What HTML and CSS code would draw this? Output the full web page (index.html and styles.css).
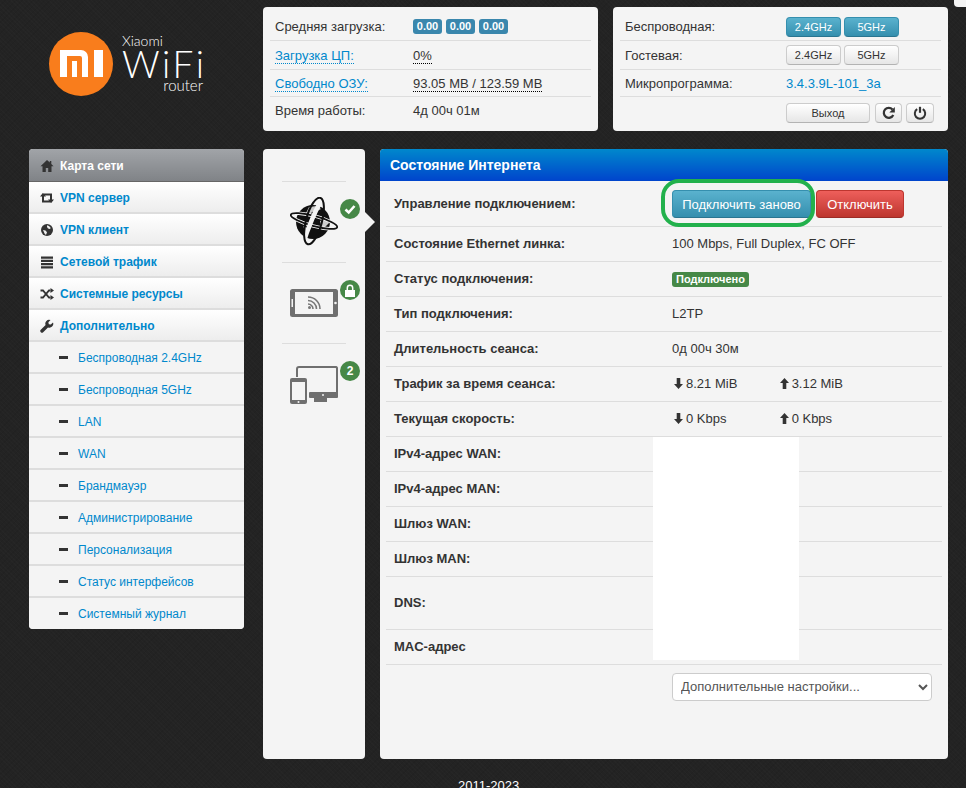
FILE: index.html
```html
<!DOCTYPE html>
<html lang="en">
<head>
    <meta charset="UTF-8">
    <meta name="viewport" content="width=device-width, initial-scale=1.0">
    <title>Xiaomi WiFi router</title>
    <link rel="stylesheet" href="styles.css">
</head>
<body>
    <div class="corner-tab"></div>
    <div class="container">
        <div class="top-row">
            <div class="logo">
                <svg class="logo-mark" width="64" height="64" viewBox="0 0 64 64">
                    <circle cx="32" cy="32" r="32" fill="#f97d1c"/>
                    <path d="M11 18h21a7 7 0 0 1 7 7v20h-6V26a2 2 0 0 0-2-2H18v21h-7z" fill="#fff"/>
                    <path d="M23 29h5v16h-5zM45 18h9v27h-9z" fill="#fff"/>
                </svg>
                <div class="logo-text">
                    <span class="logo-small">Xiaomi</span>
                    <span class="logo-big">WiFi</span>
                    <span class="logo-router">router</span>
                </div>
            </div>

            <div class="card">
                <div class="info-row">
                    <div class="info-label">Средняя загрузка:</div>
                    <div class="info-value badges"><span class="load">0.00</span><span class="load">0.00</span><span class="load">0.00</span></div>
                </div>
                <div class="info-row">
                    <div class="info-label"><a class="dotted" href="#">Загрузка ЦП:</a></div>
                    <div class="info-value"><span class="dotted-dark">0%</span></div>
                </div>
                <div class="info-row">
                    <div class="info-label"><a class="dotted" href="#">Свободно ОЗУ:</a></div>
                    <div class="info-value"><span class="dotted-dark">93.05 MB / 123.59 MB</span></div>
                </div>
                <div class="info-row">
                    <div class="info-label">Время работы:</div>
                    <div class="info-value">4д 00ч 01м</div>
                </div>
            </div>

            <div class="card card-last">
                <div class="info-row">
                    <div class="info-label">Беспроводная:</div>
                    <div class="info-value narrow btn-pair">
                        <button class="btn btn-info btn-band">2.4GHz</button>
                        <button class="btn btn-info btn-band">5GHz</button>
                    </div>
                </div>
                <div class="info-row">
                    <div class="info-label">Гостевая:</div>
                    <div class="info-value narrow btn-pair">
                        <button class="btn btn-band">2.4GHz</button>
                        <button class="btn btn-band">5GHz</button>
                    </div>
                </div>
                <div class="info-row">
                    <div class="info-label">Микропрограмма:</div>
                    <div class="info-value narrow"><a href="#">3.4.3.9L-101_3a</a></div>
                </div>
                <div class="info-row">
                    <div class="info-label"></div>
                    <div class="info-value narrow btn-tools">
                        <button class="btn btn-exit">Выход</button>
                        <button class="btn btn-icon">
                            <svg width="14" height="14" viewBox="0 0 14 14"><path d="M11.300 9A5 5 0 1 1 10.500 3.400" fill="none" stroke="#333" stroke-width="2.200"/><path d="M12.800 1v5.500H7.300z" fill="#333"/></svg>
                        </button>
                        <button class="btn btn-icon btn-power">
                            <svg width="14" height="14" viewBox="0 0 14 14"><path d="M4.200 3.200a5.200 5.200 0 1 0 5.600 0" fill="none" stroke="#333" stroke-width="2"/><path d="M7 .8v6" stroke="#333" stroke-width="2.200"/></svg>
                        </button>
                    </div>
                </div>
            </div>
        </div>

        <div class="main-row">
            <div class="sidebar">
                <a class="nav-item active" href="#">
                    <svg class="nav-icon" width="14" height="14" viewBox="0 0 14 14"><path d="M7 1 .5 7.300h2V13h3.300V9h2.400v4h3.300V7.300h2L11.300 5V2H9.800v1.600z" fill="#333"/></svg>
                    Карта сети
                </a>
                <a class="nav-item" href="#">
                    <svg class="nav-icon" width="14" height="14" viewBox="0 0 14 14"><path d="M3 4.500V10.500h7M11 9.500V3.500H4" fill="none" stroke="#333" stroke-width="2"/><path d="M0 5.500 3 1.800 6 5.500zM8 8.500h6L11 12.200z" fill="#333"/></svg>
                    VPN сервер
                </a>
                <a class="nav-item" href="#">
                    <svg class="nav-icon" width="14" height="14" viewBox="0 0 14 14"><circle cx="7" cy="7" r="6" fill="#333"/><path d="M7 2.300 9 3l1.800 2-1 1-1.800-.6L7 4zM3 7l2.500.5L7 9.300 6 12 4.500 10.500z" fill="#eee"/></svg>
                    VPN клиент
                </a>
                <a class="nav-item" href="#">
                    <svg class="nav-icon" width="14" height="14" viewBox="0 0 14 14"><path d="M1 1.500h12v2.200H1zM1 4.800h12V7H1zM1 8h12v2.200H1zM1 11.300h12v2.200H1z" fill="#333"/></svg>
                    Сетевой трафик
                </a>
                <a class="nav-item" href="#">
                    <svg class="nav-icon" width="14" height="14" viewBox="0 0 14 14"><path d="M.5 3.500h2.500l6 7h1.500" fill="none" stroke="#333" stroke-width="1.800"/><path d="M.5 10.500h2.500l6-7h1.500" fill="none" stroke="#333" stroke-width="1.800"/><path d="M10.500 1 14 3.500 10.500 6zM10.500 8 14 10.500 10.500 13z" fill="#333"/></svg>
                    Системные ресурсы
                </a>
                <a class="nav-item" href="#">
                    <svg class="nav-icon" width="14" height="14" viewBox="0 0 14 14"><path d="M13 3.500 10.800 5.600 8.800 5.200 8.400 3.200 10.500 1A3.800 3.800 0 0 0 5.600 6L.8 10.800a1.600 1.600 0 0 0 2.400 2.400L8 8.400A3.800 3.800 0 0 0 13 3.500z" fill="#333"/></svg>
                    Дополнительно
                </a>
                <a class="nav-sub" href="#"><span class="dash"></span>Беспроводная 2.4GHz</a>
                <a class="nav-sub" href="#"><span class="dash"></span>Беспроводная 5GHz</a>
                <a class="nav-sub" href="#"><span class="dash"></span>LAN</a>
                <a class="nav-sub" href="#"><span class="dash"></span>WAN</a>
                <a class="nav-sub" href="#"><span class="dash"></span>Брандмауэр</a>
                <a class="nav-sub" href="#"><span class="dash"></span>Администрирование</a>
                <a class="nav-sub" href="#"><span class="dash"></span>Персонализация</a>
                <a class="nav-sub" href="#"><span class="dash"></span>Статус интерфейсов</a>
                <a class="nav-sub" href="#"><span class="dash"></span>Системный журнал</a>
            </div>

            <div class="map-panel">
                <div class="map-arrow"></div>
                <div class="map-item">
                    <svg width="50" height="50" viewBox="0 0 50 50">
                        <circle cx="24" cy="25" r="17" fill="#111"/>
                        <path d="M20 10l8-1 4 3-4 2-5 1-2 3-4-2zM31 24l6-2 3 4-5 5-3-3zM14 29l4 2 1 5-3-2z" fill="#ccc"/>
                        <ellipse cx="25" cy="24" rx="24" ry="5" transform="rotate(15 25 24)" fill="none" stroke="#f4f4f4" stroke-width="3.500"/>
                        <ellipse cx="25" cy="24" rx="24" ry="5" transform="rotate(15 25 24)" fill="none" stroke="#111" stroke-width="1.800"/>
                        <path d="M33.500 2.500C29 8 25 17 20 30 17 37 15 43 16 46" fill="none" stroke="#f4f4f4" stroke-width="4.500"/>
                        <ellipse cx="25" cy="24" rx="24" ry="8" transform="rotate(-75 25 24)" fill="none" stroke="#111" stroke-width="2"/>
                    </svg>
                    <span class="map-badge">
                        <svg width="12" height="12" viewBox="0 0 12 12"><path d="M1.500 6.500 4.700 9.500 10.500 3" fill="none" stroke="#fff" stroke-width="2.600"/></svg>
                    </span>
                </div>
                <div class="map-item">
                    <svg width="50" height="50" viewBox="0 0 50 50">
                        <rect x="1" y="11" width="48" height="28" rx="2.500" fill="#6f6f6f"/>
                        <rect x="6" y="14" width="38" height="22" fill="#f4f4f4"/>
                        <circle cx="46.500" cy="25" r="1.300" fill="#f4f4f4"/>
                        <rect x="2.500" y="21" width="1.500" height="8" fill="#f4f4f4"/>
                        <path d="M19 19a12 12 0 0 1 12 12M19 22.500a8.500 8.500 0 0 1 8.500 8.500M19 26a5 5 0 0 1 5 5" fill="none" stroke="#777" stroke-width="1.600"/>
                        <circle cx="20.500" cy="29.500" r="1.500" fill="#777"/>
                    </svg>
                    <span class="map-badge">
                        <svg width="12" height="13" viewBox="0 0 12 13"><path d="M1 6h10v7H1z" fill="#fff"/><path d="M3.300 6V4a2.700 2.700 0 0 1 5.400 0v2" fill="none" stroke="#fff" stroke-width="1.500"/></svg>
                    </span>
                </div>
                <div class="map-item">
                    <svg width="50" height="50" viewBox="0 0 50 50">
                        <path d="M8 18V10a2 2 0 0 1 2-2h37a2 2 0 0 1 1 1v25" fill="none" stroke="#6f6f6f" stroke-width="2"/>
                        <rect x="20" y="33" width="29" height="6" rx="1" fill="#6f6f6f"/>
                        <circle cx="34" cy="36" r="1" fill="#f4f4f4"/>
                        <path d="M25 39h13v4h-13z" fill="#6f6f6f"/>
                        <rect x="1" y="19" width="17" height="26" rx="2" fill="#6f6f6f"/>
                        <rect x="3" y="23" width="13" height="18" fill="#f4f4f4"/>
                        <circle cx="9.500" cy="43" r="1" fill="#f4f4f4"/>
                    </svg>
                    <span class="map-badge">2</span>
                </div>
            </div>

            <div class="content">
                <div class="content-head">Состояние Интернета</div>
                <table class="status-table">
                    <tr class="row-first">
                        <th>Управление подключением:</th>
                        <td>
                            <div class="action-btns">
                                <button class="btn btn-info btn-action">Подключить заново</button>
                                <button class="btn btn-danger btn-action">Отключить</button>
                            </div>
                        </td>
                    </tr>
                    <tr><th>Состояние Ethernet линка:</th><td>100 Mbps, Full Duplex, FC OFF</td></tr>
                    <tr><th>Статус подключения:</th><td><span class="label-ok">Подключено</span></td></tr>
                    <tr><th>Тип подключения:</th><td>L2TP</td></tr>
                    <tr><th>Длительность сеанса:</th><td>0д 00ч 30м</td></tr>
                    <tr>
                        <th>Трафик за время сеанса:</th>
                        <td class="traffic">
                            <span class="traffic-val"><svg width="9" height="11" viewBox="0 0 10 12"><path d="M3 0h4v6.500h3L5 12 0 6.500h3z" fill="#333"/></svg>8.21 MiB</span>
                            <span class="traffic-val"><svg width="9" height="11" viewBox="0 0 10 12"><path d="M3 12h4V5.500h3L5 0 0 5.500h3z" fill="#333"/></svg>3.12 MiB</span>
                        </td>
                    </tr>
                    <tr>
                        <th>Текущая скорость:</th>
                        <td class="traffic">
                            <span class="traffic-val"><svg width="9" height="11" viewBox="0 0 10 12"><path d="M3 0h4v6.500h3L5 12 0 6.500h3z" fill="#333"/></svg>0 Kbps</span>
                            <span class="traffic-val"><svg width="9" height="11" viewBox="0 0 10 12"><path d="M3 12h4V5.500h3L5 0 0 5.500h3z" fill="#333"/></svg>0 Kbps</span>
                        </td>
                    </tr>
                    <tr><th>IPv4-адрес WAN:</th><td></td></tr>
                    <tr><th>IPv4-адрес MAN:</th><td></td></tr>
                    <tr><th>Шлюз WAN:</th><td></td></tr>
                    <tr><th>Шлюз MAN:</th><td></td></tr>
                    <tr class="row-dns"><th>DNS:</th><td></td></tr>
                    <tr><th>MAC-адрес</th><td></td></tr>
                </table>
                <div class="select-row">
                    <select class="more-select"><option>Дополнительные настройки...</option></select>
                </div>
                <!-- overlays on top of the table -->
                <div class="ring"></div>
                <div class="blank"></div>
            </div>
        </div>

        <div class="footer">2011-2023</div>
    </div>
</body>
</html>
```

FILE: styles.css
```css
html, body {
    height: 788px;
    overflow: hidden;
}
body {
    font-family: "Liberation Sans", Arial, sans-serif;
    font-size: 13px;
    margin: 0;
    padding: 0;
    color: #333;
    background-color: #232323;
    background-image:
        repeating-linear-gradient(45deg, rgba(255, 255, 255, 0.012) 0 1px, transparent 1px 3px),
        repeating-linear-gradient(-45deg, rgba(0, 0, 0, 0.06) 0 1px, transparent 1px 4px);
}
a {
    color: #0088cc;
    text-decoration: none;
}
.container {
    position: relative;
    padding: 7px 18px 0 29px;
}
.corner-tab {
    position: absolute;
    top: -6px;
    right: 0;
    width: 12px;
    height: 13px;
    background: #f4f4f4;
    border-radius: 4px 0 0 4px;
}

/* top row */
.top-row {
    display: flex;
}
.logo {
    flex: none;
    width: 234px;
    height: 124px;
    position: relative;
}
.logo-mark {
    position: absolute;
    left: 20px;
    top: 25px;
}
.logo-text {
    position: absolute;
    left: 93px;
    top: 27px;
    width: 81px;
    color: #fff;
    font-family: Lato, "Liberation Sans", sans-serif;
    font-weight: 300;
}
.logo-small {
    display: block;
    font-size: 14px;
    line-height: 14px;
}
.logo-big {
    display: block;
    font-size: 37px;
    line-height: 31px;
    letter-spacing: 2.500px;
}
.logo-router {
    display: block;
    font-size: 15px;
    line-height: 13px;
    text-align: right;
}
.card {
    flex: none;
    width: 335px;
    height: 124px;
    box-sizing: border-box;
    margin-right: 15px;
    padding: 6px 7px;
    background: #f4f4f4;
    border-radius: 4px;
}
.card-last {
    margin-right: 0;
}
.info-row {
    display: flex;
    align-items: center;
    height: 28px;
    padding-left: 5px;
    border-bottom: 1px solid #ddd;
}
.info-row:first-child {
    height: 27px;
}
.info-row:nth-child(3) {
    height: 26px;
}
.info-row:last-child {
    border-bottom: none;
    height: 27px;
}
.info-label {
    width: 138px;
    color: #333;
}
.info-value.narrow {
    margin-left: 23px;
}
.dotted {
    border-bottom: 1px dotted #0088cc;
}
.dotted-dark {
    border-bottom: 1px dotted #000;
}
.badges {
    display: flex;
    gap: 4px;
}
.load {
    display: block;
    width: 29px;
    height: 15px;
    line-height: 15px;
    text-align: center;
    font-size: 11px;
    font-weight: bold;
    color: #fff;
    background: #3a87ad;
    border-radius: 3px;
}

/* buttons */
.btn {
    font-family: inherit;
    font-size: 11px;
    color: #333;
    padding: 0;
    border: 1px solid #ccc;
    border-bottom-color: #b3b3b3;
    border-radius: 4px;
    background: linear-gradient(#ffffff, #e6e6e6);
    cursor: pointer;
}
.btn-info {
    color: #fff;
    background: linear-gradient(#5ab2ce, #358fae);
    border-color: #358fae;
    border-bottom-color: #2a7590;
}
.btn-danger {
    color: #fff;
    background: linear-gradient(#ee5f5b, #bd362f);
    border-color: #bd362f;
    border-bottom-color: #9c2c27;
}
.btn-pair {
    display: flex;
    gap: 3px;
}
.btn-band {
    width: 55px;
    height: 20px;
}
.btn-tools {
    display: flex;
    margin-top: 4px;
}
.btn-exit {
    width: 84px;
    height: 20px;
}
.btn-icon {
    width: 27px;
    height: 20px;
    margin-left: 5px;
    display: flex;
    align-items: center;
    justify-content: center;
}
.btn-power {
    width: 28px;
    margin-left: 4px;
}
.action-btns {
    display: flex;
    gap: 5px;
    padding-top: 2px;
}
.btn-action {
    height: 28px;
    font-size: 13px;
}

/* sidebar */
.main-row {
    display: flex;
    align-items: flex-start;
    margin-top: 18px;
}
.sidebar {
    width: 215px;
    margin-right: 19px;
    font-size: 12px;
    background: #f4f4f4;
    border-radius: 4px;
    overflow: hidden;
}
.nav-item, .nav-sub {
    display: flex;
    align-items: center;
    box-sizing: border-box;
    height: 32px;
    padding-top: 1px;
    border-bottom: 2px solid #ddd;
}
.nav-item {
    padding-left: 11px;
    font-weight: bold;
    background: linear-gradient(#ffffff, #ededed);
}
.nav-item.active {
    height: 33px;
    color: #fff;
    background: linear-gradient(#a1a4a8, #808387);
    border-bottom: 1px solid #666;
}
.nav-icon {
    margin-right: 6px;
    flex: none;
}
.nav-sub {
    padding-left: 30px;
    background: #f4f4f4;
}
.nav-sub:last-child {
    height: 31px;
    padding-top: 0;
    border-bottom: none;
}
.dash {
    width: 9px;
    height: 3px;
    margin-right: 10px;
    background: #333;
}

/* middle panel */
.map-panel {
    position: relative;
    flex: none;
    width: 102px;
    height: 610px;
    margin-right: 15px;
    padding-top: 32px;
    box-sizing: border-box;
    background: #f4f4f4;
    border-radius: 4px;
}
.map-arrow {
    position: absolute;
    right: -10px;
    top: 63px;
    border-left: 10px solid #f4f4f4;
    border-top: 10px solid transparent;
    border-bottom: 10px solid transparent;
}
.map-item {
    position: relative;
    height: 80px;
    margin: 0 19px 0;
    border-top: 1px solid #ddd;
    box-sizing: content-box;
}
.map-item svg {
    position: absolute;
    left: 7px;
    top: 15px;
}
.map-badge {
    position: absolute;
    left: 58px;
    top: 17px;
    width: 20px;
    height: 20px;
    display: flex;
    align-items: center;
    justify-content: center;
    color: #fff;
    font-weight: bold;
    font-size: 12px;
    background: #468847;
    border-radius: 50%;
}
.map-badge svg {
    position: static;
}

/* content */
.content {
    position: relative;
    flex: none;
    width: 568px;
    height: 610px;
    background: #f4f4f4;
    border-radius: 4px;
    overflow: hidden;
}
.content-head {
    height: 32px;
    line-height: 32px;
    padding-left: 10px;
    color: #fff;
    font-size: 14px;
    font-weight: bold;
    background: linear-gradient(#0088cc, #0044cc);
}
.status-table {
    width: 556px;
    margin: 0 6px;
    border-collapse: collapse;
    table-layout: fixed;
}
.status-table tr {
    height: 35px;
    border-bottom: 1px solid #ddd;
}
.status-table .row-first {
    height: 45px;
}
.status-table .row-dns {
    height: 53px;
}
.status-table th {
    width: 278px;
    padding: 0 0 0 8px;
    text-align: left;
    font-weight: bold;
}
.status-table td {
    padding: 0;
}
.label-ok {
    display: inline-block;
    padding: 1px 4px;
    font-size: 11px;
    font-weight: bold;
    line-height: 13px;
    color: #fff;
    background: #468847;
    border-radius: 3px;
}
.btn-action.btn-info {
    width: 139px;
}
.btn-action.btn-danger {
    width: 88px;
}
.traffic-val {
    display: inline-flex;
    align-items: center;
    gap: 3px;
    width: 102px;
    padding-left: 2px;
    box-sizing: border-box;
}
.select-row {
    display: flex;
    justify-content: flex-end;
    padding: 8px 16px 0 0;
}
.more-select {
    width: 260px;
    height: 28px;
    padding: 0 4px;
    font-family: inherit;
    font-size: 13px;
    color: #555;
    background: #fff;
    border: 1px solid #ccc;
    border-radius: 4px;
}
.ring {
    position: absolute;
    left: 281px;
    top: 30px;
    width: 146px;
    height: 40px;
    border: 4px solid #22b14c;
    border-radius: 18px;
}
.blank {
    position: absolute;
    left: 273px;
    top: 288px;
    width: 146px;
    height: 223px;
    background: #fff;
}
.footer {
    position: absolute;
    left: 458px;
    top: 778px;
    color: #fff;
    font-size: 13px;
}
```
